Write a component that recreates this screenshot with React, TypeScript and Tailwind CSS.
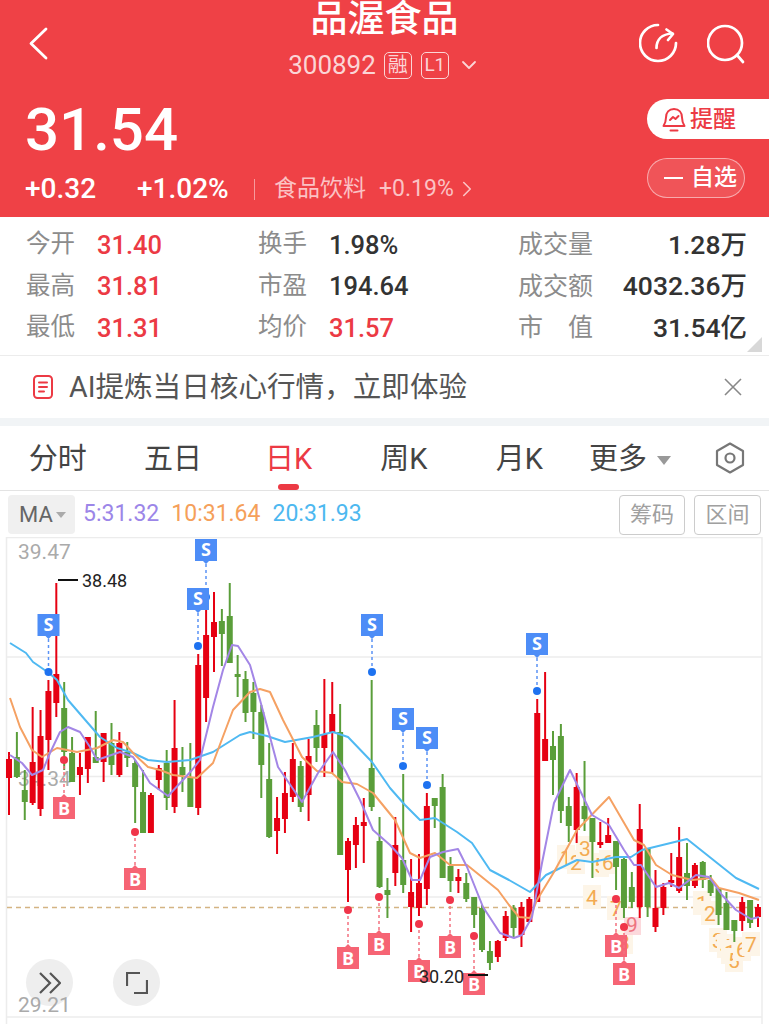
import React from 'react';
import { ChevronDown, ChevronRight } from 'lucide-react';

// wickTop, wickBottom, bodyTop, bodyBottom, r = up / g = down. Candles sit 7.884px apart.
const rawCandles: [number, number, number, number, 'r' | 'g'][] = [
  [752, 815, 759, 778, 'r'], [732, 778, 757, 777, 'g'], [770, 820, 790, 802, 'g'], [707, 805, 762, 803, 'r'],
  [710, 816, 736, 809, 'r'], [680, 770, 691, 740, 'r'], [583, 717, 674, 703, 'r'], [682, 770, 708, 752, 'g'],
  [737, 782, 753, 782, 'g'], [753, 795, 767, 775, 'r'], [737, 783, 737, 769, 'r'], [711, 760, 757, 763, 'g'],
  [733, 782, 733, 762, 'r'], [723, 775, 743, 765, 'g'], [732, 777, 743, 775, 'r'], [742, 767, 752, 758, 'g'],
  [760, 823, 763, 787, 'g'], [770, 833, 792, 833, 'g'], [793, 833, 795, 833, 'r'], [765, 790, 768, 780, 'r'],
  [750, 810, 763, 798, 'g'], [700, 813, 748, 807, 'r'], [747, 792, 767, 775, 'g'], [743, 807, 778, 807, 'g'],
  [654, 815, 665, 808, 'r'], [606, 722, 635, 698, 'r'], [592, 672, 622, 637, 'r'], [609, 666, 621, 634, 'g'],
  [583, 663, 616, 663, 'g'], [655, 697, 674, 676, 'g'], [671, 722, 679, 713, 'g'], [682, 739, 693, 712, 'g'],
  [705, 798, 712, 765, 'g'], [743, 838, 779, 837, 'g'], [797, 854, 818, 831, 'r'], [772, 833, 793, 819, 'r'],
  [743, 802, 759, 797, 'r'], [761, 812, 766, 807, 'g'], [739, 821, 756, 795, 'r'], [710, 762, 725, 748, 'g'],
  [679, 777, 734, 748, 'r'], [682, 773, 714, 733, 'r'], [704, 855, 732, 855, 'g'], [838, 902, 841, 870, 'r'],
  [817, 868, 825, 845, 'r'], [798, 863, 822, 826, 'r'], [680, 811, 768, 807, 'g'], [817, 888, 841, 887, 'g'],
  [878, 918, 890, 895, 'g'], [817, 886, 845, 873, 'r'], [774, 893, 860, 885, 'g'], [859, 932, 892, 907, 'r'],
  [854, 916, 883, 908, 'r'], [793, 905, 806, 889, 'r'], [798, 828, 798, 806, 'g'], [774, 878, 787, 878, 'g'],
  [857, 892, 866, 881, 'g'], [869, 893, 877, 881, 'r'], [873, 902, 883, 899, 'g'], [897, 928, 897, 915, 'g'],
  [905, 952, 908, 950, 'g'], [941, 970, 951, 963, 'g'], [940, 962, 941, 957, 'r'], [911, 941, 916, 938, 'r'],
  [905, 938, 908, 928, 'g'], [902, 947, 907, 935, 'r'], [897, 922, 899, 922, 'r'], [699, 902, 713, 902, 'r'],
  [672, 761, 739, 761, 'r'], [731, 795, 746, 760, 'g'], [724, 823, 736, 811, 'g'], [797, 842, 806, 826, 'g'],
  [773, 843, 787, 830, 'r'], [761, 831, 806, 819, 'g'], [818, 878, 818, 842, 'g'], [822, 848, 842, 845, 'r'],
  [818, 843, 835, 843, 'r'], [841, 890, 841, 867, 'g'], [857, 918, 859, 908, 'g'], [872, 908, 887, 902, 'g'],
  [804, 918, 829, 907, 'r'], [848, 917, 848, 907, 'g'], [870, 932, 908, 927, 'r'], [883, 915, 887, 908, 'r'],
  [853, 887, 880, 883, 'r'], [827, 893, 857, 891, 'r'], [843, 900, 873, 886, 'g'], [863, 888, 865, 886, 'r'],
  [861, 888, 862, 880, 'g'], [875, 896, 880, 893, 'g'], [888, 925, 888, 915, 'g'], [892, 930, 903, 930, 'g'],
  [920, 942, 920, 931, 'g'], [897, 931, 902, 921, 'r'], [900, 928, 900, 923, 'g'], [904, 927, 907, 917, 'r'],
];

const ma20 = '10,643 26,653 33,662 49,673 57,680 68,700 87,722 100,737 117,748 133,753 148,760 167,762 190,760 213,752 240,735 250,732 267,736 285,742 313,737 333,732 348,737 372,762 390,788 405,805 420,820 435,818 457,832 472,843 490,870 509,880 530,892 546,875 577,860 592,862 616,857 631,857 642,850 687,839 736,878 759,889';
const ma10 = '10,698 20,727 32,750 42,757 57,748 77,752 97,748 113,740 123,742 135,755 148,767 160,770 173,775 197,778 213,763 233,710 250,692 260,689 270,692 283,720 302,757 317,771 332,773 342,782 357,784 373,793 395,820 410,853 420,858 435,853 450,865 467,865 498,890 509,905 519,917 530,918 537,900 554,872 577,830 609,797 634,840 644,845 656,865 672,875 692,880 711,878 719,888 739,893 759,900';
const ma5 = '10,755 22,763 32,775 43,770 50,753 60,732 68,727 80,732 90,747 97,760 120,752 133,757 142,770 150,783 168,796 183,780 192,770 200,760 213,707 223,670 232,645 238,646 250,665 260,700 270,737 278,767 302,802 318,773 333,752 345,770 360,800 373,830 390,845 402,858 412,880 420,880 430,857 443,852 458,849 467,867 483,907 500,933 514,938 522,935 532,917 542,863 554,803 570,770 592,815 609,825 624,850 634,865 641,865 656,887 669,883 679,888 696,875 709,877 722,895 736,910 751,919 759,917';

const sellTags = [
  { x: 48.5, y: 614, dot: 672 }, { x: 206, y: 539, dot: 597 }, { x: 198, y: 588, dot: 646 }, { x: 372, y: 614, dot: 672 },
  { x: 403, y: 708, dot: 766 }, { x: 427, y: 727, dot: 785 }, { x: 537, y: 633, dot: 691 },
];
const buyTags = [
  { x: 64, y: 797, dot: 760 }, { x: 135, y: 868, dot: 832 }, { x: 348, y: 947, dot: 910 }, { x: 379, y: 933, dot: 897 },
  { x: 419, y: 960, dot: 924 }, { x: 450, y: 936, dot: 900 }, { x: 474, y: 973, dot: 936 }, { x: 616, y: 935, dot: 899 },
  { x: 624, y: 963, dot: 927 },
];
const dayMarks: [string, number, number][] = [
  ['1', 566, 857], ['2', 576, 862], ['3', 585, 848], ['5', 600, 865], ['6', 608, 862], ['4', 592, 897], ['7', 616, 908], ['8', 624, 942],
  ['1', 702, 903], ['2', 710, 913], ['3', 718, 940], ['4', 726, 946], ['1', 730, 952], ['5', 734, 960], ['6', 742, 949], ['7', 751, 944],
];

const KChart = () => (
  <svg viewBox="0 537 769 487" className="block h-[487px] w-[769px]">
    <g stroke="#ececec" strokeWidth="1.5">
      <line x1="6.500" y1="537" x2="6.500" y2="1024" />
      <line x1="762" y1="537" x2="762" y2="1024" />
      <line x1="6" y1="537.500" x2="762" y2="537.500" />
      <line x1="6" y1="657" x2="762" y2="657" />
      <line x1="6" y1="776.500" x2="762" y2="776.500" />
      <line x1="6" y1="897" x2="762" y2="897" />
      <line x1="6" y1="1017" x2="762" y2="1017" />
    </g>
    <line x1="7" y1="907.500" x2="762" y2="907.500" stroke="#d4b483" strokeWidth="1.5" strokeDasharray="5 4" />

    <g fontSize="21" fill="#aaaaaa">
      <text x="18" y="559">39.47</text>
      <text x="18" y="786">34.34</text>
    </g>

    {dayMarks.map(([t, x, y], i) => (
      <g key={i}>
        <rect x={x - 9} y={y - 12} width="18" height="24" fill="#fdf5e8" />
        <text x={x} y={y + 8} fontSize="21" fill="#f3ab52" textAnchor="middle">{t}</text>
      </g>
    ))}
    <rect x="624" y="917" width="17" height="18" fill="#fcd9dc" />
    <text x="632" y="932" fontSize="21" fill="#ee7480" textAnchor="middle">9</text>

    {rawCandles.map(([wt, wb, bt, bb, c], i) => {
      const x = 9 + i * 7.884;
      const color = c === 'r' ? '#e60012' : '#5a9e3a';
      return (
        <g key={i}>
          <line x1={x} y1={wt} x2={x} y2={wb} stroke={color} strokeWidth="2" />
          <rect x={x - 3} y={bt} width="6" height={Math.max(bb - bt, 3)} fill={color} />
        </g>
      );
    })}

    <polyline points={ma20} fill="none" stroke="#4fb9f2" strokeWidth="2" strokeLinejoin="round" />
    <polyline points={ma10} fill="none" stroke="#f5a163" strokeWidth="2" strokeLinejoin="round" />
    <polyline points={ma5} fill="none" stroke="#a386e6" strokeWidth="2" strokeLinejoin="round" />

    {sellTags.map((t, i) => (
      <g key={i}>
        <line x1={t.x} y1={t.y + 25} x2={t.x} y2={t.dot} stroke="#5b93f5" strokeWidth="1.5" strokeDasharray="3 3" />
        <circle cx={t.x} cy={t.dot} r="4" fill="#1e72f0" />
        <path d={`M${t.x - 11} ${t.y}h22v22h-8l-3 3l-3-3h-8z`} fill="#4d8df7" />
        <text x={t.x} y={t.y + 17} fontSize="18" fontWeight="700" fill="#fff" textAnchor="middle" className="font-['Open_Sans',sans-serif]">S</text>
      </g>
    ))}
    {buyTags.map((t, i) => (
      <g key={i}>
        <line x1={t.x} y1={t.dot} x2={t.x} y2={t.y - 3} stroke="#f4707f" strokeWidth="1.5" strokeDasharray="3 3" />
        <circle cx={t.x} cy={t.dot} r="4" fill="#f0354a" />
        <path d={`M${t.x - 11} ${t.y}h8l3-3l3 3h8v22h-22z`} fill="#f66474" />
        <text x={t.x} y={t.y + 18} fontSize="18" fontWeight="700" fill="#fff" textAnchor="middle" className="font-['Open_Sans',sans-serif]">B</text>
      </g>
    ))}
    <g fontSize="18" fill="#222">
      <line x1="58" y1="580" x2="78" y2="580" stroke="#111" strokeWidth="2" />
      <text x="82" y="587">38.48</text>
      <text x="419" y="983">30.20</text>
      <line x1="468" y1="975" x2="488" y2="975" stroke="#111" strokeWidth="2" />
    </g>
  </svg>
);

const StatCell = ({ label, value, red }: { label: string; value: string; red?: boolean }) => (
  <div className="flex h-[41.500px] items-center">
    <span className="w-[71px] text-[24.500px] text-[#8c8c8c]">{label}</span>
    <span className={`text-[25.500px] font-medium ${red ? 'text-[#ec3a44]' : 'text-[#333]'}`}>{value}</span>
  </div>
);

const WideCell = ({ label, value }: { label: string; value: string }) => (
  <div className="flex h-[41.500px] items-center justify-between">
    <span className="text-[25px] text-[#8c8c8c]">{label}</span>
    <span className="text-[26.500px] font-medium text-[#333]">{value}</span>
  </div>
);

const tabs = ['分时', '五日', '日K', '周K', '月K'];

export default function App() {
  return (
    <div className="h-[1024px] w-[769px] overflow-hidden bg-white font-['Roboto','Noto_Sans_CJK_SC',sans-serif]">
      <header className="flex h-[217px] flex-col bg-[#ef4146] text-white">
        <div className="grid h-[88px] grid-cols-[1fr_auto_1fr] items-start px-[22px]">
          <svg width="19" height="33" viewBox="0 0 19 33" fill="none" stroke="#fff" strokeWidth="2.800" strokeLinecap="round" strokeLinejoin="round" className="mt-[27px] ml-[7px]">
            <path d="M17 2L2 16.500L17 31" />
          </svg>
          <div className="flex flex-col items-center">
            <h1 className="text-[37px] leading-[40px] font-medium">品渥食品</h1>
            <div className="mt-[10px] flex h-[30px] items-center text-[#fbd5d6]">
              <span className="text-[26px]">300892</span>
              <span className="ml-[8px] flex h-[27px] w-[28px] items-center justify-center rounded-[5px] border border-[#fbd5d6] text-[20px]">融</span>
              <span className="ml-[9px] flex h-[27px] w-[28px] items-center justify-center rounded-[5px] border border-[#fbd5d6] text-[19px]">L1</span>
              <ChevronDown size={24} strokeWidth={1.800} className="ml-[8px]" />
            </div>
          </div>
          <div className="mt-[22px] flex items-center justify-end gap-[28px]">
            <svg width="40" height="42" viewBox="0 0 40 42" fill="none" stroke="#fff" strokeWidth="2.700" strokeLinecap="round" strokeLinejoin="round">
              <path d="M19 3A18 18 0 1 0 37 21" />
              <path d="M17.500 26c0-8 5-14 16-14.500" />
              <path d="M27.500 7.500L34 12L29 18" />
            </svg>
            <svg width="40" height="42" viewBox="0 0 40 42" fill="none" stroke="#fff" strokeWidth="2.700" strokeLinecap="round">
              <circle cx="18" cy="21" r="17" />
              <path d="M30 33l6 7" />
            </svg>
          </div>
        </div>
        <div className="flex flex-1 justify-between pl-[25px]">
          <div>
            <div className="mt-[8px] text-[60px] leading-[68px] font-medium">31.54</div>
            <div className="mt-[10px] flex items-center text-[28px] leading-[30px] font-medium">
              <span className="w-[112px]">+0.32</span>
              <span className="w-[117px]">+1.02%</span>
              <span className="h-[21px] w-px bg-[#f79a9d]" />
              <span className="ml-[19px] text-[23px] font-normal text-[#fbc2c4]">食品饮料</span>
              <span className="ml-[13px] text-[23px] font-normal text-[#fbc2c4]">+0.19%</span>
              <ChevronRight size={26} strokeWidth={1.500} className="text-[#fbc2c4]" />
            </div>
          </div>
          <div className="flex flex-col items-start gap-[19px] pt-[11px]">
            <div className="flex h-[40px] w-[122px] items-center gap-[4px] rounded-l-[20px] bg-white pt-[2px] pl-[15px] text-[23px] font-medium text-[#ec3a44]">
              <svg width="24" height="26" viewBox="0 0 24 26" fill="none" stroke="#ec3a44" strokeWidth="2" strokeLinejoin="round" strokeLinecap="round">
                <path d="M12 2c-5 0-8 3.500-8 8.500c0 4-1 6-2.500 8.500h21c-1.500-2.500-2.500-4.500-2.500-8.500c0-5-3-8.500-8-8.500z" />
                <path d="M8.500 23.500h7" />
                <path d="M8 13l3-3l2.500 2l3-3" />
              </svg>
              提醒
            </div>
            <div className="flex h-[40px] w-[98px] items-center gap-[8px] rounded-[20px] border border-white/50 bg-white/10 pl-[16px] text-[23px] font-medium">
              <span className="h-[2.500px] w-[19px] bg-white" />
              自选
            </div>
          </div>
        </div>
      </header>

      <section className="relative flex h-[139px] border-b border-[#ececec] pt-[7px] pr-[22px] pl-[26px]">
        <div className="w-[232px]">
          <StatCell label="今开" value="31.40" red />
          <StatCell label="最高" value="31.81" red />
          <StatCell label="最低" value="31.31" red />
        </div>
        <div className="w-[260px]">
          <StatCell label="换手" value="1.98%" />
          <StatCell label="市盈" value="194.64" />
          <StatCell label="均价" value="31.57" red />
        </div>
        <div className="flex-1">
          <WideCell label="成交量" value="1.28万" />
          <WideCell label="成交额" value="4032.36万" />
          <WideCell label="市　值" value="31.54亿" />
        </div>
        <span className="absolute right-[7px] bottom-[3px] h-[15px] w-[15px] bg-[#d8d8d8] [clip-path:polygon(100%_0,100%_100%,0_100%)]" />
      </section>

      <div className="flex h-[62px] items-center justify-between pr-[27px] pl-[33px]">
        <div className="flex items-center gap-[16px]">
          <svg width="20" height="24" viewBox="0 0 20 24" fill="none" stroke="#ec3a44" strokeWidth="2" strokeLinecap="round">
            <rect x="1" y="1" width="18" height="22" rx="3.500" />
            <path d="M6 7.500h8M6 12h8M6 16.500h5" />
          </svg>
          <span className="pt-[1px] text-[28.600px] text-[#555]">AI提炼当日核心行情，立即体验</span>
        </div>
        <svg width="18" height="18" viewBox="0 0 18 18" fill="none" stroke="#888" strokeWidth="1.600">
          <path d="M1 1l16 16M17 1L1 17" />
        </svg>
      </div>
      <div className="h-[8px] bg-[#f1f4f6]" />

      <nav className="flex h-[65px] items-center border-b border-[#e3e3e3] pt-[4px]">
        {tabs.map((t) => (
          <div key={t} className={`relative flex h-full w-[115.400px] items-center justify-center text-[29px] ${t === '日K' ? 'text-[#ec3a44]' : 'text-[#444]'}`}>
            {t}
            {t === '日K' && <span className="absolute bottom-[0px] left-[47px] h-[6px] w-[21px] rounded-full bg-[#ec3a44]" />}
          </div>
        ))}
        <div className="ml-[12px] flex items-center gap-[10px] text-[29px] text-[#444]">
          更多
          <span className="h-0 w-0 border-x-[7px] border-t-[9px] border-x-transparent border-t-[#999]" />
        </div>
        <svg width="30" height="32" viewBox="0 0 30 32" fill="none" stroke="#777" strokeWidth="2.200" className="mt-[-5px] ml-[44px]">
          <path d="M15 1.500l13 7.500v14l-13 7.500l-13-7.500v-14z" strokeLinejoin="round" />
          <circle cx="15" cy="16" r="4.500" />
        </svg>
      </nav>

      <div className="flex h-[46px] items-center px-[8px] pt-[1px]">
        <div className="flex h-[39px] w-[67px] items-center gap-[3px] rounded bg-[#f0f0f0] pl-[11px] text-[22px] text-[#666]">
          MA
          <span className="h-0 w-0 border-x-[5px] border-t-[6px] border-x-transparent border-t-[#aaa]" />
        </div>
        <div className="ml-[8px] flex gap-[12px] text-[23px]">
          <span className="text-[#9c86e8]">5:31.32</span>
          <span className="text-[#f5a05a]">10:31.64</span>
          <span className="text-[#4db8f0]">20:31.93</span>
        </div>
        <div className="ml-auto flex gap-[9px] text-[22px] text-[#a0a0a0]">
          <span className="flex h-[40px] w-[66px] items-center justify-center rounded border border-[#ccc]">筹码</span>
          <span className="flex h-[40px] w-[67px] items-center justify-center rounded border border-[#ccc]">区间</span>
        </div>
      </div>

      <div className="relative">
        <KChart />
        <button className="absolute top-[422px] left-[26px] flex h-[47px] w-[47px] items-center justify-center rounded-full bg-[#eeeeee]">
          <svg width="22" height="22" viewBox="0 0 22 22" fill="none" stroke="#555" strokeWidth="2.200">
            <path d="M1 1l10 10L1 21M11 1l10 10L11 21" />
          </svg>
        </button>
        <button className="absolute top-[422px] left-[113px] flex h-[47px] w-[47px] items-center justify-center rounded-full bg-[#eeeeee]">
          <svg width="22" height="22" viewBox="0 0 22 22" fill="none" stroke="#555" strokeWidth="2.200">
            <path d="M14 1H1v13M21 8v13H8" />
          </svg>
        </button>
        <span className="absolute top-[455px] left-[18px] text-[21px] leading-[26px] text-[#aaaaaa]">29.21</span>
      </div>
    </div>
  );
}
